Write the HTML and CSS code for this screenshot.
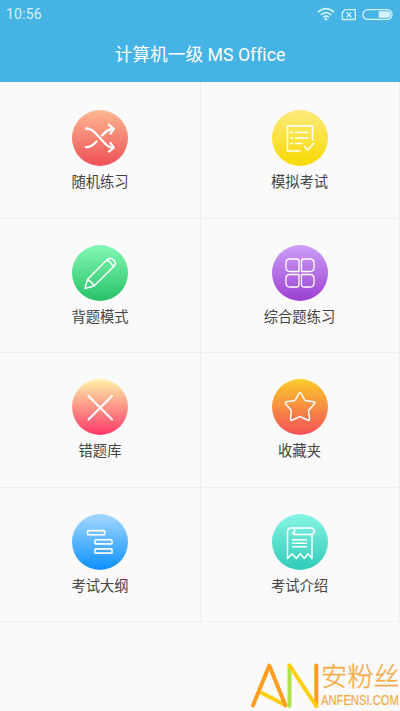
FILE: index.html
```html
<!DOCTYPE html>
<html lang="zh-CN">
<head>
<meta charset="utf-8">
<title>计算机一级 MS Office</title>
<link rel="stylesheet" href="styles.css">
</head>
<body>
<header class="header">
  <div class="status">
    <span class="time">10:56</span>
    <svg class="status-icons" width="78" height="16" viewBox="0 0 78 16" fill="none" stroke="#d5f3fb" stroke-width="1.3">
      <path d="M1 6.2Q9 -.8 17 6.2M3.7 8.9Q9 4.3 14.3 8.9M6.2 11.3Q9 8.9 11.8 11.3" stroke-width="1.7"/>
      <circle cx="9" cy="13.3" r="1.3" fill="#d5f3fb" stroke="none"/>
      <path d="M28.2 3.6H38.3V13.5H25.3V6.6ZM29.6 6.4L34.4 11.2M34.4 6.4L29.6 11.2"/>
      <rect x="46" y="3.6" width="29" height="9.8" rx="4.9"/>
      <path d="M61.7 5.2H70.2a3.3 3.3 0 0 1 0 6.6H61.7Z" fill="#d5f3fb" stroke="none"/>
    </svg>
  </div>
  <h1 class="title">计算机一级 MS Office</h1>
</header>
<main class="grid">
  <a class="cell first">
    <svg class="icon shuffle" viewBox="0 0 56 56"><g stroke-width="2.3"><path d="M14 18.5C19 18.5 21 20.5 28 28S36 37.5 41.5 37.5M14 37.2C19 37.2 21.5 35 24.5 31.5M30 25.5C34 21 36.5 19 41.5 18.8"/><path d="M37 14.8L41.7 18.8L38.4 23.5M38.4 33L41.7 37.7L37 41.6"/></g></svg>
    <span class="label">随机练习</span>
  </a>
  <a class="cell first">
    <svg class="icon exam" viewBox="0 0 56 56"><path d="M28 41H15.500V16H40.500V30M23.500 22.500H36M23.500 28H36M23.500 33.500H30M32.500 36.500L35.700 40L41.500 33.500"/><path d="M19.300 22.500H19.900M19.300 28H19.900M19.300 33.500H19.900" stroke-width="2.200"/></svg>
    <span class="label">模拟考试</span>
  </a>
  <a class="cell">
    <svg class="icon recite" viewBox="0 0 56 56"><path d="M13 43.500L15.500 34.500L35 14.800Q38 11.800 41.500 15T41.800 21.500L22 41ZM34.500 15.300Q39 16.500 41.300 22M15.500 34.500Q19.500 36.500 22 41"/></svg>
    <span class="label">背题模式</span>
  </a>
  <a class="cell">
    <svg class="icon mixed" viewBox="0 0 56 56"><g stroke-width="1.3"><path d="M18 14H24.500Q27 14 27 16.500V26.500H18Q14 26.500 14 22.500V18Q14 14 18 14ZM32 14H38Q42 14 42 18V22.500Q42 26.500 38 26.500H29.500V16.500Q29.500 14 32 14ZM18 29.500H27V39.500Q27 42 24.500 42H18Q14 42 14 38V33.500Q14 29.500 18 29.500ZM29.500 29.500H38Q42 29.500 42 33.500V38Q42 42 38 42H32Q29.500 42 29.500 39.500Z"/></g></svg>
    <span class="label">综合题练习</span>
  </a>
  <a class="cell">
    <svg class="icon wrong" viewBox="0 0 56 56"><path d="M16.500 17L40 40.500M40 17L16.500 40.500" stroke-width="2.100"/></svg>
    <span class="label">错题库</span>
  </a>
  <a class="cell">
    <svg class="icon favorite" viewBox="0 0 56 56"><path d="M26.700 14.800Q28 12.800 29.300 14.800L33 21.500L41.500 22.700Q44 23.200 42.300 25L36.500 31.500L37.500 39.500Q37.800 42 35.500 41L28 37.500L20.500 41Q18.300 42 18.500 39.500L19.300 31.500L13.700 25Q12.300 23.200 14.500 22.700L23 21.500Z"/></svg>
    <span class="label">收藏夹</span>
  </a>
  <a class="cell">
    <svg class="icon outline" viewBox="0 0 56 56"><g stroke-width="1.600"><rect x="15.600" y="16.600" width="17" height="4.200" rx=".7"/><rect x="23" y="25.700" width="17" height="4.200" rx=".7"/><rect x="23" y="34.900" width="17" height="4.200" rx=".7"/></g></svg>
    <span class="label">考试大纲</span>
  </a>
  <a class="cell">
    <svg class="icon intro" viewBox="0 0 56 56"><path d="M19 14H39Q42.500 14.500 42.500 17.300T39 20.600H22.500V14M22.500 20.600Q21 20.600 20.500 18.500M19 14Q15.500 14 15.500 18V44.500L20 39.800L24.300 44.500L28.300 39.800L32.300 44.500L36 39.800L40 44.500V20.600M20.500 25.800H34.500M20.500 29.300H34.500M20.500 32.800H34.500"/></svg>
    <span class="label">考试介绍</span>
  </a>
</main>
<footer class="watermark">
  <svg class="mark" width="70" height="50" viewBox="0 0 70 50" fill="none" stroke-width="4" stroke-linecap="round">
    <path d="M12 32L35 44" stroke="#ffce0c"/>
    <path d="M3 44.500L19.300 4.500L35.500 44.500" stroke="#ff9d1e" stroke-linejoin="round"/>
    <path d="M39.500 4.500V45" stroke="#aee34c"/>
    <path d="M66.300 4.500V45" stroke="#ff9d1e"/>
    <path d="M39.500 4.500L66.300 45" stroke="#ffce0c"/>
  </svg>
  <div class="brand">
    <span class="brand-name">安粉丝</span>
    <span class="brand-url">ANFENSI.COM</span>
  </div>
</footer>
</body>
</html>
```

FILE: styles.css
```css
* { box-sizing: border-box; }

body {
  margin: 0;
  width: 400px;
  height: 711px;
  overflow: hidden;
  position: relative;
  background: #fafafa;
  font-family: Roboto, "Noto Sans CJK SC", sans-serif;
}

.header {
  height: 82px;
  background: #45b3e3;
  color: #fff;
}

.status {
  height: 28px;
  padding: 0 5px 0 6px;
  display: flex;
  justify-content: space-between;
  align-items: center;
}

.time {
  font-size: 14px;
  line-height: 28px;
  letter-spacing: .2px;
  color: #d5f3fb;
}

.status-icons { margin-top: -1px; }

.title {
  margin: 12px 0 0;
  font-size: 17.7px;
  line-height: 30px;
  font-weight: 400;
  font-variant-ligatures: none;
  text-align: center;
}

.grid {
  display: grid;
  grid-template-columns: 201px 199px;
  grid-template-rows: 137px 134px 135px 134px;
}

.cell {
  display: flex;
  flex-direction: column;
  align-items: center;
  padding-top: 26px;
  border-right: 1px solid #efefef;
  border-bottom: 1px solid #efefef;
}

.cell:nth-child(even) { padding-right: 1px; }

.first { padding-top: 28px; }

.icon {
  width: 56px;
  height: 56px;
  border-radius: 50%;
  fill: none;
  stroke: #fff;
  stroke-width: 1.5;
  stroke-linecap: round;
  stroke-linejoin: round;
}

.shuffle { background: linear-gradient(#fdb892, #ee4f55); }
.exam { background: linear-gradient(#fcea7c, #f9d900); }
.recite { background: linear-gradient(#83f9b5, #26c267); }
.mixed { background: linear-gradient(#cda0f8, #9b3fd1); }
.wrong { background: linear-gradient(#fff3a8, #fb3768); }
.favorite { background: linear-gradient(#fbcb2b, #f6515a); }
.outline { background: linear-gradient(#a5d9ff, #0b90fe); }
.intro { background: linear-gradient(#88f5e5, #2fcab8); }

.label {
  margin-top: 5px;
  font-size: 14.3px;
  line-height: 22px;
  color: #444;
}

.watermark {
  position: absolute;
  right: 0;
  bottom: 0;
  width: 150px;
  height: 50px;
  display: flex;
}

.mark { flex: none; }

.brand {
  width: 79px;
  margin-left: 1px;
  color: #f5aa45;
}

.brand-name {
  display: block;
  height: 31px;
  font-size: 26.3px;
  line-height: 33px;
  font-weight: 300;
  -webkit-text-stroke: .3px #f5aa45;
  white-space: nowrap;
}

.brand-url {
  display: block;
  width: 98px;
  height: 16px;
  font-family: "Liberation Sans", sans-serif;
  font-size: 14px;
  line-height: 16px;
  -webkit-text-stroke: .2px #f5aa45;
  transform: scaleX(.8);
  transform-origin: left;
}
```
